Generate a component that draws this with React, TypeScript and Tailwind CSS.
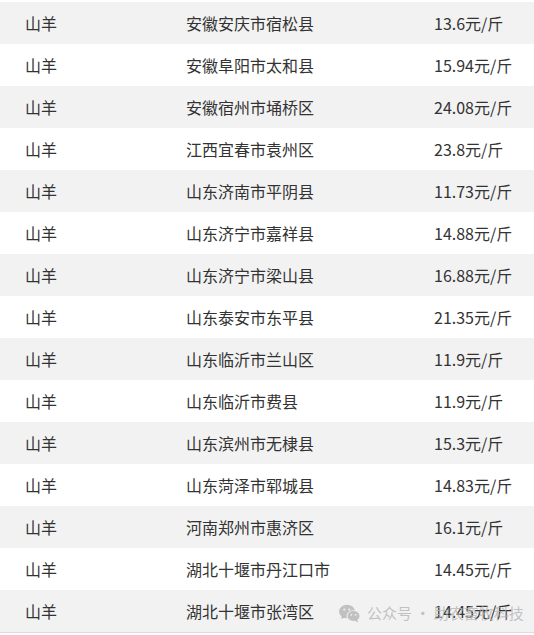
import React from "react";

const rows: [string, string, string][] = [
  ["山羊", "安徽安庆市宿松县", "13.6元/斤"],
  ["山羊", "安徽阜阳市太和县", "15.94元/斤"],
  ["山羊", "安徽宿州市埇桥区", "24.08元/斤"],
  ["山羊", "江西宜春市袁州区", "23.8元/斤"],
  ["山羊", "山东济南市平阴县", "11.73元/斤"],
  ["山羊", "山东济宁市嘉祥县", "14.88元/斤"],
  ["山羊", "山东济宁市梁山县", "16.88元/斤"],
  ["山羊", "山东泰安市东平县", "21.35元/斤"],
  ["山羊", "山东临沂市兰山区", "11.9元/斤"],
  ["山羊", "山东临沂市费县", "11.9元/斤"],
  ["山羊", "山东滨州市无棣县", "15.3元/斤"],
  ["山羊", "山东菏泽市郓城县", "14.83元/斤"],
  ["山羊", "河南郑州市惠济区", "16.1元/斤"],
  ["山羊", "湖北十堰市丹江口市", "14.45元/斤"],
  ["山羊", "湖北十堰市张湾区", "14.45元/斤"],
];

const WeChatIcon: React.FC = () => (
  <svg width="22" height="19" viewBox="0 0 22 19" fill="currentColor">
    <ellipse cx="8" cy="7.5" rx="8" ry="6.8" />
    <path d="M3 12 L2.2 15.2 L6 13 Z" />
    <ellipse cx="14.5" cy="12" rx="7" ry="5.8" fill="#f2f2f2" />
    <ellipse cx="14.5" cy="12" rx="6" ry="5" />
    <path d="M18 15.5 L19.5 18.5 L15.5 16.5 Z" />
    <circle cx="5.3" cy="5.5" r="1.1" fill="#f2f2f2" />
    <circle cx="10.3" cy="5.5" r="1.1" fill="#f2f2f2" />
    <circle cx="12.4" cy="10.8" r="0.9" fill="#f2f2f2" />
    <circle cx="16.6" cy="10.8" r="0.9" fill="#f2f2f2" />
  </svg>
);

const App: React.FC = () => {
  return (
    <div
      className="relative w-[534px] h-[635px] bg-white pt-[2px] overflow-hidden"
      style={{ fontFamily: '"Noto Sans CJK SC", "Noto Sans", sans-serif' }}
    >
      <table className="w-full border-collapse table-fixed text-[16px] text-[#333]">
        <colgroup>
          <col className="w-[161px]" />
          <col className="w-[248px]" />
          <col />
        </colgroup>
        <tbody>
          {rows.map((r, i) => (
            <tr
              key={i}
              className={`h-[42px] ${i % 2 === 0 ? "bg-[#f2f2f2]" : "bg-white"} ${
                i === rows.length - 1 ? "border-b border-[#dcdcdc]" : ""
              }`}
            >
              <td className="pl-[25px] p-0 leading-none whitespace-nowrap">{r[0]}</td>
              <td className="pl-[25px] p-0 leading-none whitespace-nowrap">{r[1]}</td>
              <td className="pl-[25px] p-0 leading-none whitespace-nowrap">{r[2]}</td>
            </tr>
          ))}
        </tbody>
      </table>
      <div className="absolute left-[339px] top-[602px] flex items-center gap-[6px] text-[15px] text-[#b4b4b4]/80 pointer-events-none">
        <WeChatIcon />
        <span className="whitespace-nowrap">公众号 · 助农畜牧科技</span>
      </div>
    </div>
  );
};

export default App;
